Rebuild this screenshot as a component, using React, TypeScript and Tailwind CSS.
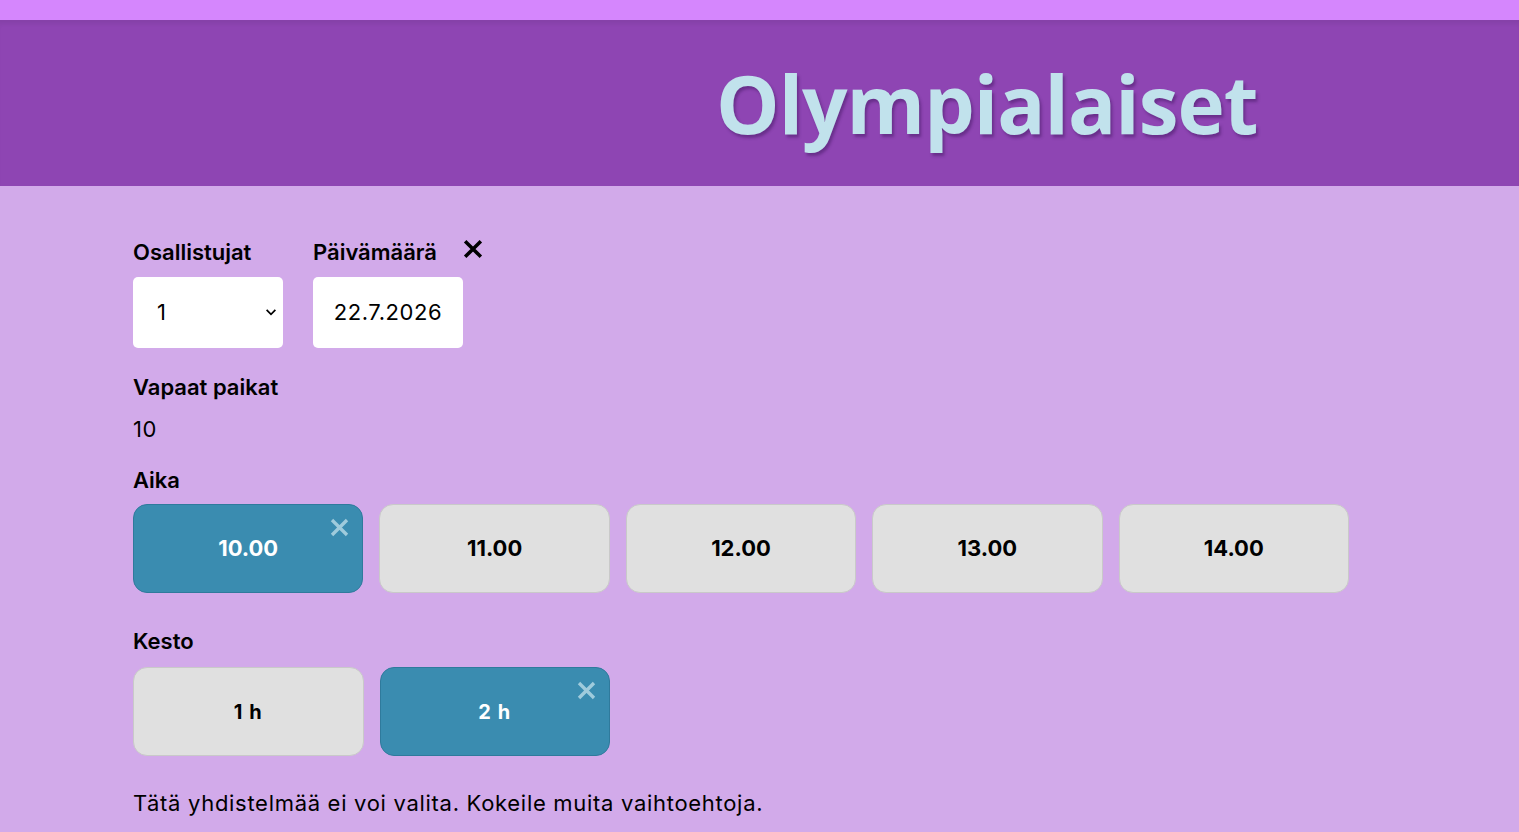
import React, { useState } from 'react';

const times = ['10.00', '11.00', '12.00', '13.00', '14.00'];
const durations = ['1 h', '2 h'];

function CloseMark({ className }: { className?: string }) {
  return (
    <svg viewBox="0 0 20 20" className={className} fill="none" stroke="currentColor" strokeWidth="3.2" strokeLinecap="square">
      <path d="M4 4 L16 16 M16 4 L4 16" />
    </svg>
  );
}

function Choice({ label, selected, onClick, small }: { label: string; selected: boolean; onClick: () => void; small?: boolean }) {
  return (
    <button
      onClick={onClick}
      className={
        selected
          ? 'relative h-[89px] rounded-[14px] border border-[#2f7a9c] bg-[#3a8cb0] text-white font-bold'
          : 'relative h-[89px] rounded-[14px] border border-[#c9c9c9] bg-[#e0e0e0] text-black font-bold'
      }
    >
      <span className={small ? 'text-[20px] tracking-[1px]' : 'text-[22px]'}>{label}</span>
      {selected && <CloseMark className="absolute right-[12px] top-[12px] h-[21px] w-[21px] text-[#9fcbdc]" />}
    </button>
  );
}

export default function App() {
  const [time, setTime] = useState('10.00');
  const [dur, setDur] = useState('2 h');

  return (
    <div className="min-h-screen bg-[#d2aaea] text-black" style={{ fontFamily: 'Inter, "Noto Sans", sans-serif' }}>
      <div className="h-[20px] bg-[#d586fd]" />
      <header className="flex h-[166px] items-center bg-[#8e45b3] pl-[716px] shadow-[inset_0_6px_4px_-2px_rgba(0,0,0,0.06)]">
        <h1
          className="text-[80px] font-bold leading-none tracking-[-1px] text-[#c1e2ec] [text-shadow:2px_3px_3px_rgba(60,20,90,0.45)]"
          style={{ fontFamily: '"Open Sans", Inter, sans-serif' }}
        >
          Olympialaiset
        </h1>
      </header>

      <main className="px-[133px] pt-[52px]">
        <div className="flex gap-[30px]">
          <div className="flex flex-col gap-[11px]">
            <span className="text-[22px] font-semibold leading-[28px]">Osallistujat</span>
            <div className="relative flex h-[71px] w-[150px] items-center rounded-[5px] bg-white pl-[24px] text-[22px] tracking-[0.6px]">
              1
              <svg viewBox="0 0 12 8" className="absolute right-[6px] top-[32px] h-[7px] w-[12px]" fill="none" stroke="black" strokeWidth="2">
                <path d="M1 1 L6 6 L11 1" />
              </svg>
            </div>
          </div>
          <div className="flex flex-col gap-[11px]">
            <div className="flex items-start">
              <span className="text-[22px] font-semibold leading-[28px]">Päivämäärä</span>
              <CloseMark className="ml-[25px] h-[22px] w-[22px] text-black" />
            </div>
            <div className="flex h-[71px] w-[150px] items-center justify-center rounded-[5px] bg-white text-[22px] tracking-[0.6px]">
              22.7.2026
            </div>
          </div>
        </div>

        <div className="mt-[25px] text-[22px] font-semibold leading-[28px]">Vapaat paikat</div>
        <div className="mt-[14px] text-[22px] leading-[28px] tracking-[0.6px]">10</div>

        <div className="mt-[23px] text-[22px] font-semibold leading-[28px]">Aika</div>
        <div className="mt-[10px] grid w-[1216px] grid-cols-5 gap-[16px]">
          {times.map(t => (
            <Choice key={t} label={t} selected={t === time} onClick={() => setTime(t)} />
          ))}
        </div>

        <div className="mt-[34px] text-[22px] font-semibold leading-[28px]">Kesto</div>
        <div className="mt-[12px] grid w-[477px] grid-cols-2 gap-[16px]">
          {durations.map(d => (
            <Choice key={d} label={d} small selected={d === dur} onClick={() => setDur(d)} />
          ))}
        </div>

        <p className="mt-[33px] text-[22px] leading-[28px] tracking-[0.7px]">Tätä yhdistelmää ei voi valita. Kokeile muita vaihtoehtoja.</p>
      </main>
    </div>
  );
}
